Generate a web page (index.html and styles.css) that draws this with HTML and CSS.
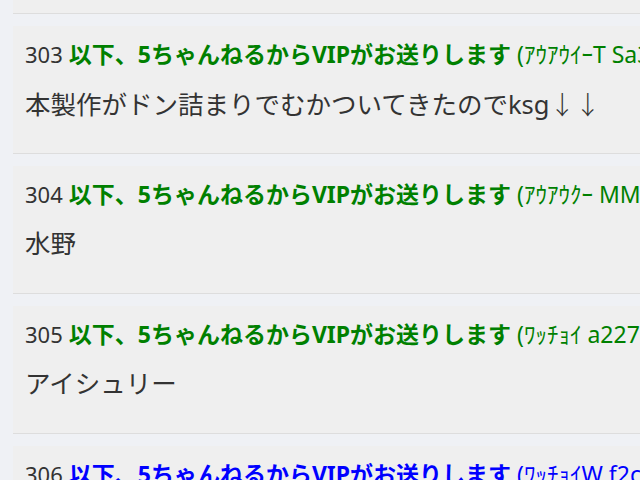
FILE: index.html
```html
<!DOCTYPE html>
<html lang="ja">
<head>
<meta charset="utf-8">
<title>スレッド</title>
<link rel="stylesheet" href="styles.css">
</head>
<body>
<div class="thread">
  <div class="post post-tail"></div>
  <div class="post">
    <div class="meta"><span class="num">303</span> <span class="name">以下、5ちゃんねるからVIPがお送りします</span> <span class="uid">(ｱｳｱｳｲｰT Sa3f-Lk9x)</span></div>
    <div class="message">本製作がドン詰まりでむかついてきたのでksg<span class="cjk">↓↓</span></div>
  </div>
  <div class="post">
    <div class="meta"><span class="num">304</span> <span class="name">以下、5ちゃんねるからVIPがお送りします</span> <span class="uid">(ｱｳｱｳｸｰ MM2b-Qe7d)</span></div>
    <div class="message">水野</div>
  </div>
  <div class="post">
    <div class="meta"><span class="num">305</span> <span class="name">以下、5ちゃんねるからVIPがお送りします</span> <span class="uid">(ﾜｯﾁｮｲ a227-Tr4m)</span></div>
    <div class="message">アイシュリー</div>
  </div>
  <div class="post">
    <div class="meta"><span class="num">306</span> <span class="name mail">以下、5ちゃんねるからVIPがお送りします</span> <span class="uid mail">(ﾜｯﾁｮｲW f2c1-Hs8n)</span></div>
    <div class="message">　</div>
  </div>
</div>
</body>
</html>
```

FILE: styles.css
```css
html, body {
  margin: 0;
  padding: 0;
}

body {
  background: #eff1f5;
  font-family: "Noto Sans", "Noto Sans CJK JP", sans-serif;
  color: #333;
  overflow: hidden;
  width: 640px;
  height: 480px;
}

.thread {
  display: flex;
  flex-direction: column;
  gap: 12px;
  margin-left: 13px;
  width: 720px;
}

.post {
  background: #efefef;
  border-bottom: 1px solid #dddddd;
  padding: 12px 12px 33px;
  height: 82px;
  box-sizing: content-box;
  white-space: nowrap;
  overflow: hidden;
}

.post.post-tail {
  height: 0;
  padding: 0 0 13px;
}

.meta {
  font-size: 23px;
  line-height: 32px;
}

.num {
  color: #333;
  font-size: 22px;
}

.name {
  color: #008000;
  font-weight: bold;
}

.uid {
  color: #008000;
}

.name.mail,
.uid.mail {
  color: #0000ff;
}

.message {
  margin-top: 15px;
  font-size: 25.5px;
  line-height: 36px;
}

.cjk {
  font-family: "Noto Sans CJK JP", sans-serif;
  font-weight: 300;
}
```
